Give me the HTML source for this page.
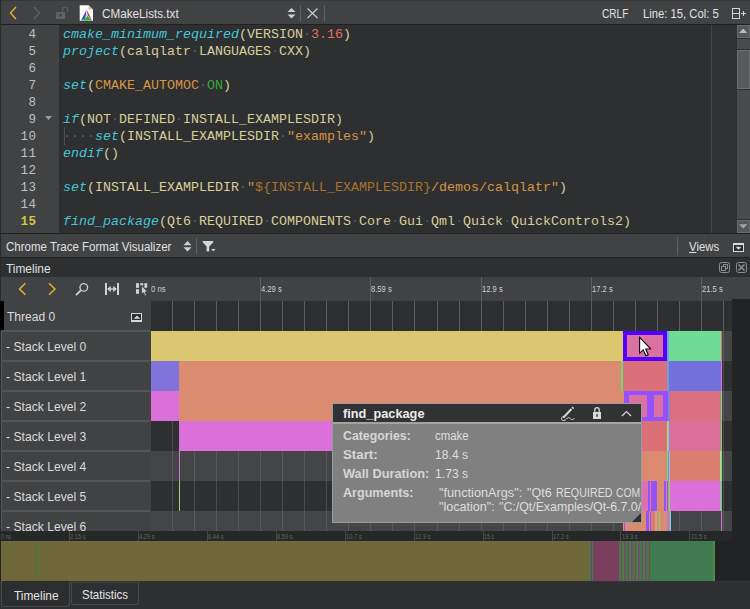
<!DOCTYPE html>
<html>
<head>
<meta charset="utf-8">
<title>Qt Creator - Chrome Trace Format Visualizer</title>
<style>
html,body{margin:0;padding:0;}
body{width:750px;height:609px;overflow:hidden;background:#2e2f30;position:relative;font-family:"Liberation Sans",sans-serif;font-size:12px;color:#d6d6d6;}
.a{position:absolute;}
.t{position:absolute;white-space:pre;line-height:1;transform-origin:0 0;}
svg{position:absolute;overflow:visible;}
/* editor */
#toolbar{left:0;top:0;width:750px;height:24px;background:#404244;}
#gutter{left:0;top:25px;width:59px;height:208px;background:#404244;}
#editor{left:59px;top:25px;width:691px;height:208px;background:#2e2f30;}
.ln{position:absolute;left:0;width:36.5px;text-align:right;font-family:"Liberation Mono",monospace;font-size:12.5px;letter-spacing:0.5px;margin-top:1px;line-height:17px;height:17px;color:#bec0c2;}
.cl{position:absolute;left:63px;font-family:"Liberation Mono",monospace;font-size:13.33px;line-height:17px;height:17px;color:#d6cf9a;white-space:pre;}
.k{color:#45c6d6;font-style:italic;}
.n{color:#e9695f;}
.s{color:#d69545;}
.g{color:#38a83a;}
.v{color:#a6732f;}
.w{color:#5b5c5d;}
/* panels */
.bar{background:#404244;}
.dk{background:#1f2021;}
/* timeline */
.rl{position:absolute;left:1px;width:150px;height:30px;background:#404244;box-sizing:border-box;border-left:1px solid #555657;}
.rs{position:absolute;left:1px;width:149px;height:2px;background:#535455;}
.rowA{position:absolute;left:151px;width:581px;height:30px;background:#2e2f30;}
.rowB{position:absolute;left:151px;width:581px;height:30px;background:#444546;}
.b{position:absolute;height:30px;}
</style>
</head>
<body>

<!-- ===== editor toolbar ===== -->
<div class="a" id="toolbar"></div>
<div class="a" style="left:0;top:0;width:750px;height:1px;background:#37383a;"></div>
<div class="a dk" style="left:0;top:24px;width:750px;height:1px;"></div>
<div class="a" id="gutter"></div>
<div class="a" id="editor"></div>
<div class="a" style="left:0;top:0;width:1px;height:233px;background:#2b2c2d;"></div>
<svg style="left:0;top:0;" width="750" height="25" viewBox="0 0 750 25">
  <!-- back / forward -->
  <polyline points="16,7 10.5,13 16,19" fill="none" stroke="#e0b42a" stroke-width="1.4"/>
  <polyline points="34,7 39.5,13 34,19" fill="none" stroke="#606163" stroke-width="1.4"/>
  <!-- lock (open, disabled) -->
  <rect x="56" y="12" width="9" height="7" fill="#606163"/>
  <rect x="59.5" y="14" width="2" height="2.5" fill="#404244"/>
  <path d="M62.5,12 V9.5 A2.5,2.5 0 0 1 67.5,9.5 V12" fill="none" stroke="#606163" stroke-width="1.2"/>
  <!-- cmake file icon -->
  <path d="M79.7,5.2 H88.6 L93,9.6 V20.8 H79.7 Z" fill="#fbfbfb"/>
  <path d="M88.6,5.2 V9.6 H93 Z" fill="#bdbdbd"/>
  <polygon points="86.6,9.8 81.1,20.2 85.3,18.5" fill="#2a4bd0"/>
  <polygon points="86.6,9.8 92.1,20.2 87.7,15.2" fill="#dc2430"/>
  <polygon points="81.1,20.4 92.1,20.4 87.5,15.8 85.3,18.5" fill="#2bb03a"/>
  <polygon points="86.5,12.8 85.5,17.8 87.4,15.4" fill="#cfcfcf"/>
  <!-- combo arrows -->
  <polygon points="287.5,12 295.5,12 291.5,8" fill="#cfcfcf"/>
  <polygon points="287.5,14.5 295.5,14.5 291.5,18.5" fill="#cfcfcf"/>
  <rect x="300" y="5" width="1" height="16" fill="#606163"/>
  <!-- close x -->
  <path d="M307.5,8.5 L317.5,18 M317.5,8.5 L307.5,18" stroke="#cdcdcd" stroke-width="1.1" fill="none"/>
  <rect x="324" y="5" width="1" height="16" fill="#606163"/>
  <!-- split icon -->
  <rect x="732.5" y="8.5" width="7" height="10" fill="none" stroke="#d4d4d4" stroke-width="1"/>
  <rect x="732" y="13" width="8" height="1" fill="#d4d4d4"/>
  <rect x="741" y="13" width="5" height="1" fill="#d4d4d4"/>
  <rect x="743" y="11" width="1" height="5" fill="#d4d4d4"/>
</svg>

<!-- ===== line numbers ===== -->
<div id="lines">
<div class="ln" style="top:26px;">4</div>
<div class="ln" style="top:43px;">5</div>
<div class="ln" style="top:60px;">6</div>
<div class="ln" style="top:77px;">7</div>
<div class="ln" style="top:94px;">8</div>
<div class="ln" style="top:111px;">9</div>
<div class="ln" style="top:128px;">10</div>
<div class="ln" style="top:145px;">11</div>
<div class="ln" style="top:162px;">12</div>
<div class="ln" style="top:179px;">13</div>
<div class="ln" style="top:196px;">14</div>
<div class="ln" style="top:213px;color:#d6c540;font-weight:bold;">15</div>
</div>
<!-- fold marker line 9 -->
<svg style="left:0;top:0;" width="60" height="240"><polygon points="45,116 52,116 48.5,120" fill="#9a9b9c"/></svg>

<!-- ===== code ===== -->
<div id="code">
<div class="cl" style="top:26px;"><span class="k">cmake_minimum_required</span>(VERSION<span class="w">·</span><span class="n">3.16</span>)</div>
<div class="cl" style="top:43px;"><span class="k">project</span>(calqlatr<span class="w">·</span>LANGUAGES<span class="w">·</span>CXX)</div>
<div class="cl" style="top:77px;"><span class="k">set</span>(<span class="s">CMAKE_AUTOMOC</span><span class="w">·</span><span class="g">ON</span>)</div>
<div class="cl" style="top:111px;"><span class="k">if</span>(NOT<span class="w">·</span>DEFINED<span class="w">·</span>INSTALL_EXAMPLESDIR)</div>
<div class="cl" style="top:128px;"><span class="w">····</span><span class="k">set</span>(INSTALL_EXAMPLESDIR<span class="w">·</span><span class="s">"examples"</span>)</div>
<div class="cl" style="top:145px;"><span class="k">endif</span>()</div>
<div class="cl" style="top:179px;"><span class="k">set</span>(INSTALL_EXAMPLEDIR<span class="w">·</span><span class="s">"</span><span class="v">${INSTALL_EXAMPLESDIR}</span><span class="s">/demos/calqlatr"</span>)</div>
<div class="cl" style="top:213px;"><span class="k">find_package</span>(Qt6<span class="w">·</span>REQUIRED<span class="w">·</span>COMPONENTS<span class="w">·</span>Core<span class="w">·</span>Gui<span class="w">·</span>Qml<span class="w">·</span>Quick<span class="w">·</span>QuickControls2)</div>
</div>
<!-- indent guide -->
<div class="a" style="left:64px;top:127px;width:1px;height:18px;background:#505152;"></div>
<!-- right margin -->
<div class="a" style="left:711px;top:25px;width:1px;height:208px;background:#434446;"></div>
<div class="a" style="left:712px;top:25px;width:25px;height:208px;background:#303132;"></div>
<!-- vertical scrollbar -->
<div class="a" style="left:737px;top:25px;width:13px;height:208px;background:#4a4b4d;"></div>
<div class="a" style="left:737px;top:25px;width:13px;height:13px;background:#565759;box-sizing:border-box;border:1px solid #696a6c;"></div>
<div class="a" style="left:737px;top:38px;width:13px;height:1px;background:#303132;"></div>
<div class="a" style="left:737px;top:49px;width:13px;height:1px;background:#303132;"></div>
<div class="a" style="left:737px;top:50px;width:13px;height:39px;background:#58595b;box-sizing:border-box;border:1px solid #6d6e70;"></div>
<div class="a" style="left:737px;top:89px;width:13px;height:1px;background:#303132;"></div>
<div class="a" style="left:737px;top:219px;width:13px;height:1px;background:#303132;"></div>
<div class="a" style="left:737px;top:220px;width:13px;height:13px;background:#565759;box-sizing:border-box;border:1px solid #696a6c;"></div>
<svg style="left:0;top:0;" width="750" height="240">
  <polygon points="739,33 747.4,33 743.2,28.8" fill="#bebebe"/>
  <polygon points="739,224.2 747.4,224.2 743.2,228.4" fill="#a4a5a6"/>
</svg>

<!-- ===== visualizer toolbar ===== -->
<div class="a dk" style="left:0;top:233px;width:750px;height:1px;"></div>
<div class="a bar" style="left:0;top:234px;width:750px;height:23px;"></div>
<div class="a dk" style="left:0;top:257px;width:750px;height:1px;"></div>
<!-- timeline toolbar / ruler bar -->
<div class="a bar" style="left:0;top:277px;width:750px;height:24px;"></div>
<svg style="left:0;top:0;" width="750" height="305" viewBox="0 0 750 305">
  <!-- combo arrows -->
  <polygon points="183.5,245.3 191.5,245.3 187.5,241" fill="#cfcfcf"/>
  <polygon points="183.5,247.3 191.5,247.3 187.5,251.6" fill="#cfcfcf"/>
  <rect x="196" y="238" width="1" height="16" fill="#5f6062"/>
  <!-- filter funnel -->
  <path d="M202.7,241 H213.3 V242.3 L209.2,246.6 V251.5 H206.6 V246.6 L202.7,242.3 Z" fill="#d6d6d6"/>
  <polygon points="211,249 215.6,249 213.3,251.3" fill="#d6d6d6"/>
  <!-- views separator + icon -->
  <rect x="677" y="237" width="1" height="18" fill="#5f6062"/>
  <rect x="733.5" y="243.5" width="10" height="8" fill="#2c2d2e" stroke="#dadada" stroke-width="1"/>
  <rect x="733" y="243" width="11" height="2" fill="#dadada"/>
  <polygon points="735.6,246.8 741.4,246.8 738.5,249.7" fill="#dadada"/>
  <!-- timeline title float / close buttons -->
  <g fill="none" stroke="#8c8d8e" stroke-width="1">
    <rect x="719.5" y="262.5" width="10" height="10" rx="2"/>
    <rect x="723.5" y="264.5" width="4" height="4"/>
    <rect x="721.5" y="266.5" width="4" height="4" fill="#2e2f30"/>
    <rect x="736.5" y="262.5" width="10" height="10" rx="2"/>
    <path d="M738.5,264.5 L744.5,270.5 M744.5,264.5 L738.5,270.5" stroke-width="1.7"/>
  </g>
  <!-- timeline toolbar icons -->
  <polyline points="25.5,283.3 19.5,289 25.5,294.7" fill="none" stroke="#e0b42a" stroke-width="1.5"/>
  <polyline points="49,283.3 55,289 49,294.7" fill="none" stroke="#e0b42a" stroke-width="1.5"/>
  <circle cx="83.8" cy="287.4" r="3.8" fill="none" stroke="#d2d2d2" stroke-width="1.3"/>
  <path d="M80.8,290.4 L76,295.2" stroke="#d2d2d2" stroke-width="1.8" fill="none"/>
  <rect x="105" y="283" width="2" height="12" fill="#d2d2d2"/>
  <rect x="117" y="283" width="2" height="12" fill="#d2d2d2"/>
  <rect x="108.5" y="288.3" width="7" height="1.4" fill="#d2d2d2"/>
  <polygon points="107.2,289 110.8,285.8 110.8,292.2" fill="#d2d2d2"/>
  <polygon points="116.8,289 113.2,285.8 113.2,292.2" fill="#d2d2d2"/>
  <!-- select-range icon -->
  <g fill="#d2d2d2">
    <rect x="136" y="283.2" width="3" height="4.6"/>
    <rect x="140.3" y="283.2" width="3" height="2.2"/>
    <rect x="144.4" y="283.2" width="2.8" height="4.6"/>
    <rect x="136" y="289.2" width="3" height="4.6"/>
    <polygon points="141.6,285.6 141.6,294.2 143.5,292.6 145,296 146.5,295.3 145,292 147.5,291.8" stroke="#404244" stroke-width="0.8"/>
  </g>
</svg>
<!-- left-edge --><div class="a" style="left:0;top:234px;width:1px;height:67px;background:#28292a;"></div>

<!-- ===== timeline body ===== -->
<div class="a" style="left:732px;top:299px;width:18px;height:282px;background:#222324;"></div>
<div class="a" style="left:0;top:301px;width:4px;height:30px;background:#000;"></div>
<div class="a" style="left:4px;top:301px;width:147px;height:30px;background:#404244;"></div>
<div class="rowA" style="top:301px;"></div>
<div class="rl" style="top:331px;height:30px;"></div>
<div class="rowB" style="top:331px;height:30px;"></div>
<div class="rl" style="top:361px;height:30px;"></div>
<div class="rowA" style="top:361px;height:30px;"></div>
<div class="rl" style="top:391px;height:30px;"></div>
<div class="rowB" style="top:391px;height:30px;"></div>
<div class="rl" style="top:421px;height:30px;"></div>
<div class="rowA" style="top:421px;height:30px;"></div>
<div class="rl" style="top:451px;height:30px;"></div>
<div class="rowB" style="top:451px;height:30px;"></div>
<div class="rl" style="top:481px;height:30px;"></div>
<div class="rowA" style="top:481px;height:30px;"></div>
<div class="rl" style="top:511px;height:20px;"></div>
<div class="rowB" style="top:511px;height:20px;"></div>
<div class="a" style="left:0;top:331px;width:1px;height:200px;background:#2b2c2d;"></div>
<div class="rs" style="top:330px;"></div>
<div class="rs" style="top:360px;"></div>
<div class="rs" style="top:390px;"></div>
<div class="rs" style="top:420px;"></div>
<div class="rs" style="top:450px;"></div>
<div class="rs" style="top:480px;"></div>
<div class="rs" style="top:510px;"></div>
<svg style="left:0;top:0;" width="750" height="540" viewBox="0 0 750 540">
<g fill="#5c5d5e">
<rect x="172" y="301" width="1" height="30"/>
<rect x="194" y="301" width="1" height="30"/>
<rect x="216" y="301" width="1" height="30"/>
<rect x="238" y="301" width="1" height="30"/>
<rect x="260" y="301" width="1" height="30"/>
<rect x="282" y="301" width="1" height="30"/>
<rect x="304" y="301" width="1" height="30"/>
<rect x="326" y="301" width="1" height="30"/>
<rect x="348" y="301" width="1" height="30"/>
<rect x="370" y="301" width="1" height="30"/>
<rect x="392" y="301" width="1" height="30"/>
<rect x="414" y="301" width="1" height="30"/>
<rect x="437" y="301" width="1" height="30"/>
<rect x="459" y="301" width="1" height="30"/>
<rect x="481" y="301" width="1" height="30"/>
<rect x="503" y="301" width="1" height="30"/>
<rect x="525" y="301" width="1" height="30"/>
<rect x="547" y="301" width="1" height="30"/>
<rect x="569" y="301" width="1" height="30"/>
<rect x="591" y="301" width="1" height="30"/>
<rect x="613" y="301" width="1" height="30"/>
<rect x="635" y="301" width="1" height="30"/>
<rect x="657" y="301" width="1" height="30"/>
<rect x="679" y="301" width="1" height="30"/>
<rect x="701" y="301" width="1" height="30"/>
<rect x="723" y="301" width="1" height="30"/>
<rect x="260" y="277" width="1" height="24"/>
<rect x="370" y="277" width="1" height="24"/>
<rect x="481" y="277" width="1" height="24"/>
<rect x="591" y="277" width="1" height="24"/>
<rect x="701" y="277" width="1" height="24"/>
</g>
<g fill="#585959">
<rect x="172" y="331" width="1" height="30"/>
<rect x="194" y="331" width="1" height="30"/>
<rect x="216" y="331" width="1" height="30"/>
<rect x="238" y="331" width="1" height="30"/>
<rect x="260" y="331" width="1" height="30"/>
<rect x="282" y="331" width="1" height="30"/>
<rect x="304" y="331" width="1" height="30"/>
<rect x="326" y="331" width="1" height="30"/>
<rect x="348" y="331" width="1" height="30"/>
<rect x="370" y="331" width="1" height="30"/>
<rect x="392" y="331" width="1" height="30"/>
<rect x="414" y="331" width="1" height="30"/>
<rect x="437" y="331" width="1" height="30"/>
<rect x="459" y="331" width="1" height="30"/>
<rect x="481" y="331" width="1" height="30"/>
<rect x="503" y="331" width="1" height="30"/>
<rect x="525" y="331" width="1" height="30"/>
<rect x="547" y="331" width="1" height="30"/>
<rect x="569" y="331" width="1" height="30"/>
<rect x="591" y="331" width="1" height="30"/>
<rect x="613" y="331" width="1" height="30"/>
<rect x="635" y="331" width="1" height="30"/>
<rect x="657" y="331" width="1" height="30"/>
<rect x="679" y="331" width="1" height="30"/>
<rect x="701" y="331" width="1" height="30"/>
<rect x="723" y="331" width="1" height="30"/>
</g>
<g fill="#4a4b4c">
<rect x="172" y="361" width="1" height="30"/>
<rect x="194" y="361" width="1" height="30"/>
<rect x="216" y="361" width="1" height="30"/>
<rect x="238" y="361" width="1" height="30"/>
<rect x="260" y="361" width="1" height="30"/>
<rect x="282" y="361" width="1" height="30"/>
<rect x="304" y="361" width="1" height="30"/>
<rect x="326" y="361" width="1" height="30"/>
<rect x="348" y="361" width="1" height="30"/>
<rect x="370" y="361" width="1" height="30"/>
<rect x="392" y="361" width="1" height="30"/>
<rect x="414" y="361" width="1" height="30"/>
<rect x="437" y="361" width="1" height="30"/>
<rect x="459" y="361" width="1" height="30"/>
<rect x="481" y="361" width="1" height="30"/>
<rect x="503" y="361" width="1" height="30"/>
<rect x="525" y="361" width="1" height="30"/>
<rect x="547" y="361" width="1" height="30"/>
<rect x="569" y="361" width="1" height="30"/>
<rect x="591" y="361" width="1" height="30"/>
<rect x="613" y="361" width="1" height="30"/>
<rect x="635" y="361" width="1" height="30"/>
<rect x="657" y="361" width="1" height="30"/>
<rect x="679" y="361" width="1" height="30"/>
<rect x="701" y="361" width="1" height="30"/>
<rect x="723" y="361" width="1" height="30"/>
</g>
<g fill="#585959">
<rect x="172" y="391" width="1" height="30"/>
<rect x="194" y="391" width="1" height="30"/>
<rect x="216" y="391" width="1" height="30"/>
<rect x="238" y="391" width="1" height="30"/>
<rect x="260" y="391" width="1" height="30"/>
<rect x="282" y="391" width="1" height="30"/>
<rect x="304" y="391" width="1" height="30"/>
<rect x="326" y="391" width="1" height="30"/>
<rect x="348" y="391" width="1" height="30"/>
<rect x="370" y="391" width="1" height="30"/>
<rect x="392" y="391" width="1" height="30"/>
<rect x="414" y="391" width="1" height="30"/>
<rect x="437" y="391" width="1" height="30"/>
<rect x="459" y="391" width="1" height="30"/>
<rect x="481" y="391" width="1" height="30"/>
<rect x="503" y="391" width="1" height="30"/>
<rect x="525" y="391" width="1" height="30"/>
<rect x="547" y="391" width="1" height="30"/>
<rect x="569" y="391" width="1" height="30"/>
<rect x="591" y="391" width="1" height="30"/>
<rect x="613" y="391" width="1" height="30"/>
<rect x="635" y="391" width="1" height="30"/>
<rect x="657" y="391" width="1" height="30"/>
<rect x="679" y="391" width="1" height="30"/>
<rect x="701" y="391" width="1" height="30"/>
<rect x="723" y="391" width="1" height="30"/>
</g>
<g fill="#4a4b4c">
<rect x="172" y="421" width="1" height="30"/>
<rect x="194" y="421" width="1" height="30"/>
<rect x="216" y="421" width="1" height="30"/>
<rect x="238" y="421" width="1" height="30"/>
<rect x="260" y="421" width="1" height="30"/>
<rect x="282" y="421" width="1" height="30"/>
<rect x="304" y="421" width="1" height="30"/>
<rect x="326" y="421" width="1" height="30"/>
<rect x="348" y="421" width="1" height="30"/>
<rect x="370" y="421" width="1" height="30"/>
<rect x="392" y="421" width="1" height="30"/>
<rect x="414" y="421" width="1" height="30"/>
<rect x="437" y="421" width="1" height="30"/>
<rect x="459" y="421" width="1" height="30"/>
<rect x="481" y="421" width="1" height="30"/>
<rect x="503" y="421" width="1" height="30"/>
<rect x="525" y="421" width="1" height="30"/>
<rect x="547" y="421" width="1" height="30"/>
<rect x="569" y="421" width="1" height="30"/>
<rect x="591" y="421" width="1" height="30"/>
<rect x="613" y="421" width="1" height="30"/>
<rect x="635" y="421" width="1" height="30"/>
<rect x="657" y="421" width="1" height="30"/>
<rect x="679" y="421" width="1" height="30"/>
<rect x="701" y="421" width="1" height="30"/>
<rect x="723" y="421" width="1" height="30"/>
</g>
<g fill="#585959">
<rect x="172" y="451" width="1" height="30"/>
<rect x="194" y="451" width="1" height="30"/>
<rect x="216" y="451" width="1" height="30"/>
<rect x="238" y="451" width="1" height="30"/>
<rect x="260" y="451" width="1" height="30"/>
<rect x="282" y="451" width="1" height="30"/>
<rect x="304" y="451" width="1" height="30"/>
<rect x="326" y="451" width="1" height="30"/>
<rect x="348" y="451" width="1" height="30"/>
<rect x="370" y="451" width="1" height="30"/>
<rect x="392" y="451" width="1" height="30"/>
<rect x="414" y="451" width="1" height="30"/>
<rect x="437" y="451" width="1" height="30"/>
<rect x="459" y="451" width="1" height="30"/>
<rect x="481" y="451" width="1" height="30"/>
<rect x="503" y="451" width="1" height="30"/>
<rect x="525" y="451" width="1" height="30"/>
<rect x="547" y="451" width="1" height="30"/>
<rect x="569" y="451" width="1" height="30"/>
<rect x="591" y="451" width="1" height="30"/>
<rect x="613" y="451" width="1" height="30"/>
<rect x="635" y="451" width="1" height="30"/>
<rect x="657" y="451" width="1" height="30"/>
<rect x="679" y="451" width="1" height="30"/>
<rect x="701" y="451" width="1" height="30"/>
<rect x="723" y="451" width="1" height="30"/>
</g>
<g fill="#4a4b4c">
<rect x="172" y="481" width="1" height="30"/>
<rect x="194" y="481" width="1" height="30"/>
<rect x="216" y="481" width="1" height="30"/>
<rect x="238" y="481" width="1" height="30"/>
<rect x="260" y="481" width="1" height="30"/>
<rect x="282" y="481" width="1" height="30"/>
<rect x="304" y="481" width="1" height="30"/>
<rect x="326" y="481" width="1" height="30"/>
<rect x="348" y="481" width="1" height="30"/>
<rect x="370" y="481" width="1" height="30"/>
<rect x="392" y="481" width="1" height="30"/>
<rect x="414" y="481" width="1" height="30"/>
<rect x="437" y="481" width="1" height="30"/>
<rect x="459" y="481" width="1" height="30"/>
<rect x="481" y="481" width="1" height="30"/>
<rect x="503" y="481" width="1" height="30"/>
<rect x="525" y="481" width="1" height="30"/>
<rect x="547" y="481" width="1" height="30"/>
<rect x="569" y="481" width="1" height="30"/>
<rect x="591" y="481" width="1" height="30"/>
<rect x="613" y="481" width="1" height="30"/>
<rect x="635" y="481" width="1" height="30"/>
<rect x="657" y="481" width="1" height="30"/>
<rect x="679" y="481" width="1" height="30"/>
<rect x="701" y="481" width="1" height="30"/>
<rect x="723" y="481" width="1" height="30"/>
</g>
<g fill="#585959">
<rect x="172" y="511" width="1" height="20"/>
<rect x="194" y="511" width="1" height="20"/>
<rect x="216" y="511" width="1" height="20"/>
<rect x="238" y="511" width="1" height="20"/>
<rect x="260" y="511" width="1" height="20"/>
<rect x="282" y="511" width="1" height="20"/>
<rect x="304" y="511" width="1" height="20"/>
<rect x="326" y="511" width="1" height="20"/>
<rect x="348" y="511" width="1" height="20"/>
<rect x="370" y="511" width="1" height="20"/>
<rect x="392" y="511" width="1" height="20"/>
<rect x="414" y="511" width="1" height="20"/>
<rect x="437" y="511" width="1" height="20"/>
<rect x="459" y="511" width="1" height="20"/>
<rect x="481" y="511" width="1" height="20"/>
<rect x="503" y="511" width="1" height="20"/>
<rect x="525" y="511" width="1" height="20"/>
<rect x="547" y="511" width="1" height="20"/>
<rect x="569" y="511" width="1" height="20"/>
<rect x="591" y="511" width="1" height="20"/>
<rect x="613" y="511" width="1" height="20"/>
<rect x="635" y="511" width="1" height="20"/>
<rect x="657" y="511" width="1" height="20"/>
<rect x="679" y="511" width="1" height="20"/>
<rect x="701" y="511" width="1" height="20"/>
<rect x="723" y="511" width="1" height="20"/>
</g>
<rect x="131.5" y="313.5" width="10" height="8" fill="#2c2d2e" stroke="#d6d6d6" stroke-width="1"/>
<rect x="131" y="320" width="11" height="2" fill="#d6d6d6"/>
<polygon points="133.6,318.7 140.4,318.7 137,315.5" fill="#d6d6d6"/>
</svg>
<div class="a" style="left:151px;top:331px;width:472px;height:30px;background:#dbc76f;"></div>
<div class="a" style="left:623px;top:331px;width:44px;height:30px;background:#5500ff;"></div>
<div class="a" style="left:627px;top:335px;width:36px;height:22px;background:#db70a3;"></div>
<div class="a" style="left:667px;top:331px;width:2px;height:30px;background:#70a8db;"></div>
<div class="a" style="left:669px;top:331px;width:52px;height:30px;background:#70db94;"></div>
<div class="a" style="left:721px;top:331px;width:1px;height:30px;background:#db7070;"></div>
<div class="a" style="left:151px;top:361px;width:28px;height:30px;background:#8273db;"></div>
<div class="a" style="left:179px;top:361px;width:442px;height:30px;background:#db8b70;"></div>
<div class="a" style="left:621px;top:361px;width:2px;height:30px;background:#70db70;"></div>
<div class="a" style="left:623px;top:361px;width:44px;height:30px;background:#db707a;"></div>
<div class="a" style="left:667px;top:361px;width:2px;height:30px;background:#70a0db;"></div>
<div class="a" style="left:669px;top:361px;width:52px;height:30px;background:#7370db;"></div>
<div class="a" style="left:721px;top:361px;width:1px;height:30px;background:#db70db;"></div>
<div class="a" style="left:151px;top:391px;width:28px;height:30px;background:#db70db;"></div>
<div class="a" style="left:179px;top:391px;width:445px;height:30px;background:#db8b70;"></div>
<div class="a" style="left:624px;top:391px;width:44px;height:30px;background:#9452ff;"></div>
<div class="a" style="left:629px;top:395px;width:18px;height:22px;background:#db70a3;"></div>
<div class="a" style="left:654px;top:395px;width:9px;height:22px;background:#db70a3;"></div>
<div class="a" style="left:668px;top:391px;width:2px;height:30px;background:#8a86c8;"></div>
<div class="a" style="left:670px;top:391px;width:51px;height:30px;background:#db7082;"></div>
<div class="a" style="left:721px;top:391px;width:1px;height:30px;background:#70db70;"></div>
<div class="a" style="left:179px;top:421px;width:444px;height:30px;background:#db70db;"></div>
<div class="a" style="left:623px;top:421px;width:44px;height:30px;background:#db7078;"></div>
<div class="a" style="left:667px;top:421px;width:1px;height:30px;background:#b8db70;"></div>
<div class="a" style="left:668px;top:421px;width:1px;height:30px;background:#70dbb0;"></div>
<div class="a" style="left:669px;top:421px;width:1px;height:30px;background:#c070db;"></div>
<div class="a" style="left:670px;top:421px;width:51px;height:30px;background:#db709a;"></div>
<div class="a" style="left:721px;top:421px;width:1px;height:30px;background:#70db70;"></div>
<div class="a" style="left:179px;top:451px;width:1px;height:30px;background:#db70db;"></div>
<div class="a" style="left:623px;top:451px;width:44px;height:30px;background:#db8a70;"></div>
<div class="a" style="left:667px;top:451px;width:1px;height:30px;background:#70db80;"></div>
<div class="a" style="left:668px;top:451px;width:1px;height:30px;background:#a080db;"></div>
<div class="a" style="left:669px;top:451px;width:1px;height:30px;background:#70d0db;"></div>
<div class="a" style="left:670px;top:451px;width:50px;height:30px;background:#db8070;"></div>
<div class="a" style="left:720px;top:451px;width:1px;height:30px;background:#c0db70;"></div>
<div class="a" style="left:721px;top:451px;width:1px;height:30px;background:#70db90;"></div>
<div class="a" style="left:179px;top:481px;width:1px;height:30px;background:#8fdb70;"></div>
<div class="a" style="left:623px;top:481px;width:25px;height:30px;background:#db70b4;"></div>
<div class="a" style="left:648px;top:481px;width:2px;height:30px;background:#9452ff;"></div>
<div class="a" style="left:650px;top:481px;width:1px;height:30px;background:#db8b70;"></div>
<div class="a" style="left:651px;top:481px;width:6px;height:30px;background:#9452ff;"></div>
<div class="a" style="left:657px;top:481px;width:7px;height:30px;background:#db8b70;"></div>
<div class="a" style="left:664px;top:481px;width:2px;height:30px;background:#9452ff;"></div>
<div class="a" style="left:666px;top:481px;width:1px;height:30px;background:#db8b70;"></div>
<div class="a" style="left:667px;top:481px;width:1px;height:30px;background:#9452ff;"></div>
<div class="a" style="left:668px;top:481px;width:1px;height:30px;background:#c0a070;"></div>
<div class="a" style="left:669px;top:481px;width:1px;height:30px;background:#70db80;"></div>
<div class="a" style="left:670px;top:481px;width:50px;height:30px;background:#db70db;"></div>
<div class="a" style="left:720px;top:481px;width:1px;height:30px;background:#70db90;"></div>
<div class="a" style="left:721px;top:481px;width:1px;height:30px;background:#b0a0a0;"></div>
<div class="a" style="left:623px;top:511px;width:48px;height:20px;background:#db8b70;"></div>
<div class="a" style="left:624px;top:511px;width:1px;height:20px;background:#9452ff;"></div>
<div class="a" style="left:646px;top:511px;width:3px;height:20px;background:#9452ff;"></div>
<div class="a" style="left:650px;top:511px;width:1px;height:20px;background:#9452ff;"></div>
<div class="a" style="left:651px;top:511px;width:4px;height:20px;background:#db7a78;"></div>
<div class="a" style="left:655px;top:511px;width:2px;height:20px;background:#dba070;"></div>
<div class="a" style="left:659px;top:511px;width:1px;height:20px;background:#70db80;"></div>
<div class="a" style="left:667px;top:511px;width:2px;height:20px;background:#a080e0;"></div>
<div class="a" style="left:670px;top:511px;width:1px;height:20px;background:#70d0e0;"></div>
<div class="a" style="left:721px;top:511px;width:1px;height:20px;background:#db70db;"></div>

<!-- ===== event details tooltip ===== -->
<div class="a" style="left:332px;top:403px;width:310px;height:120px;background:#9a9a9a;"></div>
<div class="a" style="left:333px;top:404px;width:308px;height:18px;background:#313234;"></div>
<div class="a" style="left:333px;top:422px;width:308px;height:2px;background:#a4a4a4;"></div>
<div class="a" style="left:333px;top:424px;width:308px;height:98px;background:#808080;"></div>
<svg style="left:0;top:0;" width="750" height="530" viewBox="0 0 750 530">
  <!-- annotate pencil -->
  <path d="M563.2,416.3 L570.7,408.3 L572.2,409.7 L564.7,417.7 L562.8,418.3 Z" fill="#d8d8d8"/>
  <path d="M571.4,407.6 L572.4,406.5 L574.2,408.1 L573.2,409.2 Z" fill="#d8d8d8"/>
  <path d="M563.2,416.4 C560.6,417.6 560.8,420.6 563.8,420.5 C566.4,420.4 566.4,417.6 568.6,417.7 C570.8,417.8 570.6,421 574.6,418.6" fill="none" stroke="#d8d8d8" stroke-width="1"/>
  <!-- lock -->
  <rect x="593" y="412" width="8" height="7" fill="#d8d8d8"/>
  <path d="M594.8,412 V410 A2.2,2.4 0 0 1 599.2,410 V412" fill="none" stroke="#d8d8d8" stroke-width="1.3"/>
  <rect x="596.3" y="414.3" width="1.4" height="2.4" fill="#2e2f30"/>
  <!-- collapse chevron -->
  <polyline points="622,416 626.5,411.6 631,416" fill="none" stroke="#d8d8d8" stroke-width="1.3"/>
  <!-- resize grip -->
  <polygon points="641,513 641,522 632,522" fill="#2e2f30"/>
</svg>

<!-- ===== overview ===== -->
<div class="a" style="left:0;top:531px;width:732px;height:10px;background:#262728;"></div>
<div class="a" style="left:0;top:541px;width:750px;height:40px;background:#222324;"></div>
<div class="a" style="left:1px;top:541px;width:589px;height:40px;background:#6f683b;"></div>
<div class="a" style="left:36px;top:541px;width:1px;height:40px;background:#3f7a3f;"></div>
<div class="a" style="left:590px;top:541px;width:29px;height:40px;background:#7a3f5e;"></div>
<div class="a" style="left:619px;top:541px;width:31px;height:40px;background:repeating-linear-gradient(90deg,#3f7a50 0,#3f7a50 2px,#7a4a45 2px,#7a4a45 3px,#4d7a50 3px,#4d7a50 5px,#6a4a8a 5px,#6a4a8a 6px,#7a5a45 6px,#7a5a45 7px);"></div>
<div class="a" style="left:650px;top:541px;width:65px;height:40px;background:#3f7a50;"></div>
<svg style="left:0;top:0;" width="750" height="609" viewBox="0 0 750 609">
  <g fill="#3f7a50"><rect x="589" y="541" width="2" height="40"/><rect x="592" y="541" width="1" height="40"/></g>
  <g fill="#454647">
    <rect x="69" y="531" width="1" height="10"/><rect x="138" y="531" width="1" height="10"/><rect x="207" y="531" width="1" height="10"/>
    <rect x="276" y="531" width="1" height="10"/><rect x="345" y="531" width="1" height="10"/><rect x="414" y="531" width="1" height="10"/>
    <rect x="483" y="531" width="1" height="10"/><rect x="552" y="531" width="1" height="10"/><rect x="620" y="531" width="1" height="10"/>
    <rect x="689" y="531" width="1" height="10"/>
  </g>
</svg>
<div class="a" id="ovend" style="left:713px;top:541px;width:2px;height:40px;background:#4a8a48;"></div>
<!-- ===== bottom tabs ===== -->
<div class="a" style="left:0;top:581px;width:750px;height:28px;background:#2e2f30;"></div>
<div class="a" style="left:70px;top:581px;width:680px;height:1px;background:#353637;"></div>
<div class="a" style="left:1px;top:581px;width:69px;height:26px;box-sizing:border-box;border:1px solid #48494a;border-top:none;border-radius:0 0 3px 3px;background:#2c2d2e;"></div>
<div class="a" style="left:71px;top:582px;width:68px;height:23px;box-sizing:border-box;border:1px solid #48494a;border-top:1px solid #3c3d3e;border-radius:0 0 3px 3px;background:#2e2f30;"></div>

<!-- ===== fitted UI text ===== -->
<div id="uitext">
<div class="t" id="t0" style="left:102.3px;top:7.8px;font-size:12px;color:#e1e1e1;transform:scaleX(0.9747);">CMakeLists.txt</div>
<div class="t" id="t1" style="left:601.7px;top:7.8px;font-size:12px;color:#e1e1e1;transform:scaleX(0.8391);">CRLF</div>
<div class="t" id="t2" style="left:643.3px;top:7.8px;font-size:12px;color:#e1e1e1;transform:scaleX(0.9378);">Line: 15, Col: 5</div>
<div class="t" id="t3" style="left:6.3px;top:240.8px;font-size:12px;color:#e1e1e1;transform:scaleX(0.9588);">Chrome Trace Format Visualizer</div>
<div class="t" id="t4" style="left:688.8px;top:240.8px;font-size:12px;color:#e1e1e1;transform:scaleX(0.9493);"><span style="text-decoration:underline;text-underline-offset:1px;">V</span>iews</div>
<div class="t" id="t5" style="left:5.7px;top:262.8px;font-size:12px;color:#e1e1e1;transform:scaleX(0.9910);">Timeline</div>
<div class="t" id="t6" style="left:151.3px;top:284.8px;font-size:8.5px;color:#cfd0d1;transform:scaleX(0.9018);">0 ns</div>
<div class="t" id="t7" style="left:261.0px;top:284.8px;font-size:8.5px;color:#cfd0d1;transform:scaleX(0.8939);">4.29 s</div>
<div class="t" id="t8" style="left:371.3px;top:284.8px;font-size:8.5px;color:#cfd0d1;transform:scaleX(0.8939);">8.59 s</div>
<div class="t" id="t9" style="left:481.5px;top:284.8px;font-size:8.5px;color:#cfd0d1;transform:scaleX(0.8939);">12.9 s</div>
<div class="t" id="t10" style="left:591.5px;top:284.8px;font-size:8.5px;color:#cfd0d1;transform:scaleX(0.8939);">17.2 s</div>
<div class="t" id="t11" style="left:701.8px;top:284.8px;font-size:8.5px;color:#cfd0d1;transform:scaleX(0.8939);">21.5 s</div>
<div class="t" id="t12" style="left:7.2px;top:310.8px;font-size:12px;color:#dcdcdc;transform:scaleX(1.0035);">Thread 0</div>
<div class="t" id="t13" style="left:6.3px;top:340.8px;font-size:12px;color:#dcdcdc;transform:scaleX(1.0117);">- Stack Level 0</div>
<div class="t" id="t14" style="left:6.3px;top:370.8px;font-size:12px;color:#dcdcdc;transform:scaleX(1.0117);">- Stack Level 1</div>
<div class="t" id="t15" style="left:6.3px;top:400.8px;font-size:12px;color:#dcdcdc;transform:scaleX(1.0117);">- Stack Level 2</div>
<div class="t" id="t16" style="left:6.3px;top:430.8px;font-size:12px;color:#dcdcdc;transform:scaleX(1.0117);">- Stack Level 3</div>
<div class="t" id="t17" style="left:6.3px;top:460.8px;font-size:12px;color:#dcdcdc;transform:scaleX(1.0117);">- Stack Level 4</div>
<div class="t" id="t18" style="left:6.3px;top:490.8px;font-size:12px;color:#dcdcdc;transform:scaleX(1.0117);">- Stack Level 5</div>
<div class="t" id="t19" style="left:6.3px;top:520.8px;font-size:12px;color:#dcdcdc;transform:scaleX(1.0117);">- Stack Level 6</div>
<div class="t" id="t20" style="left:1.3px;top:532.9px;font-size:7px;color:#626365;transform:scaleX(0.7556);">0 ns</div>
<div class="t" id="t21" style="left:70.3px;top:532.9px;font-size:7px;color:#626365;transform:scaleX(0.8177);">2.15 s</div>
<div class="t" id="t22" style="left:139.3px;top:532.9px;font-size:7px;color:#626365;transform:scaleX(0.8177);">4.29 s</div>
<div class="t" id="t23" style="left:208.3px;top:532.9px;font-size:7px;color:#626365;transform:scaleX(0.8177);">6.44 s</div>
<div class="t" id="t24" style="left:277.3px;top:532.9px;font-size:7px;color:#626365;transform:scaleX(0.8177);">8.59 s</div>
<div class="t" id="t25" style="left:346.3px;top:532.9px;font-size:7px;color:#626365;transform:scaleX(0.8177);">10.7 s</div>
<div class="t" id="t26" style="left:415.3px;top:532.9px;font-size:7px;color:#626365;transform:scaleX(0.8177);">12.9 s</div>
<div class="t" id="t27" style="left:484.3px;top:532.9px;font-size:7px;color:#626365;transform:scaleX(0.7556);">15 s</div>
<div class="t" id="t28" style="left:553.3px;top:532.9px;font-size:7px;color:#626365;transform:scaleX(0.8177);">17.2 s</div>
<div class="t" id="t29" style="left:622.3px;top:532.9px;font-size:7px;color:#626365;transform:scaleX(0.8177);">19.3 s</div>
<div class="t" id="t30" style="left:691.3px;top:532.9px;font-size:7px;color:#626365;transform:scaleX(0.8177);">21.5 s</div>
<div class="t" id="t31" style="left:342.5px;top:407.0px;font-size:13px;color:#ececec;transform:scaleX(0.9808);font-weight:bold;">find_package</div>
<div class="t" id="t32" style="left:342.5px;top:430.0px;font-size:12px;color:#d6d6d6;transform:scaleX(1.0268);font-weight:bold;">Categories:</div>
<div class="t" id="t33" style="left:434.8px;top:430.0px;font-size:12px;color:#dedede;transform:scaleX(0.9478);">cmake</div>
<div class="t" id="t34" style="left:342.5px;top:449.1px;font-size:12px;color:#d6d6d6;transform:scaleX(1.1071);font-weight:bold;">Start:</div>
<div class="t" id="t35" style="left:435.2px;top:449.1px;font-size:12px;color:#dedede;transform:scaleX(1.0121);">18.4 s</div>
<div class="t" id="t36" style="left:342.5px;top:468.0px;font-size:12px;color:#d6d6d6;transform:scaleX(1.0669);font-weight:bold;">Wall Duration:</div>
<div class="t" id="t37" style="left:435.2px;top:468.0px;font-size:12px;color:#dedede;transform:scaleX(1.0121);">1.73 s</div>
<div class="t" id="t38" style="left:342.5px;top:487.1px;font-size:12px;color:#d6d6d6;transform:scaleX(1.0469);font-weight:bold;">Arguments:</div>
<div class="t" id="t39" style="left:438.8px;top:487.1px;font-size:12px;color:#dedede;transform:scaleX(1.0590);">"functionArgs":</div>
<div class="t" id="t40" style="left:526.8px;top:487.1px;font-size:12px;color:#dedede;transform:scaleX(1.0462);">"Qt6</div>
<div class="t" id="t41" style="left:555.5px;top:487.1px;font-size:12px;color:#dedede;transform:scaleX(0.8920);">REQUIRED</div>
<div class="t" id="t42" style="left:616.2px;top:487.1px;font-size:12px;color:#dedede;transform:scaleX(0.8679);">COM</div>
<div class="t" id="t43" style="left:438.8px;top:501.1px;font-size:12px;color:#dedede;transform:scaleX(1.0466);">"location":</div>
<div class="t" id="t44" style="left:499.0px;top:501.1px;font-size:12px;color:#dedede;transform:scaleX(1.0292);">"C:/Qt/Examples/</div>
<div class="t" id="t45" style="left:593.3px;top:501.1px;font-size:12px;color:#dedede;transform:scaleX(1.0324);">Qt-6.7.0/</div>
<div class="t" id="t46" style="left:13.5px;top:589.8px;font-size:12px;color:#e4e4e4;transform:scaleX(0.9910);">Timeline</div>
<div class="t" id="t47" style="left:82.0px;top:589.2px;font-size:12px;color:#e4e4e4;transform:scaleX(0.9580);">Statistics</div>
</div>
<!-- ===== mouse cursor ===== -->
<svg style="left:0;top:0;" width="750" height="400" viewBox="0 0 750 400">
  <path d="M639.6,337.4 V353.3 L643.2,349.9 L645.9,355.7 L648.2,354.7 L645.7,349 L650.6,348.8 Z" fill="#fff" stroke="#0a0a0a" stroke-width="1.1" stroke-linejoin="miter"/>
</svg>

</body>
</html>
